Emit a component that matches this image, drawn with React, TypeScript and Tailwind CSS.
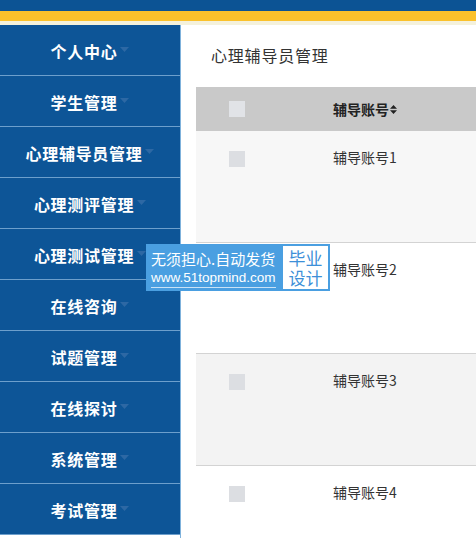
const menu = [
  '个人中心',
  '学生管理',
  '心理辅导员管理',
  '心理测评管理',
  '心理测试管理',
  '在线咨询',
  '试题管理',
  '在线探讨',
  '系统管理',
  '考试管理',
];

const rows = [
  { name: '辅导账号1', bg: 'bg-[#f7f7f7]' },
  { name: '辅导账号2', bg: 'bg-white' },
  { name: '辅导账号3', bg: 'bg-[#f3f3f3]' },
  { name: '辅导账号4', bg: 'bg-white' },
];

const font = { fontFamily: '"Noto Sans CJK SC", "Liberation Sans", sans-serif' };

export default function App() {
  return (
    <div className="relative w-[476px] h-[538px] overflow-hidden bg-white" style={font}>
      {/* top bars */}
      <div className="h-[11px] bg-[#0c5394]" />
      <div className="h-[10px] bg-[#fbc12b]" />
      <div className="h-[4px] bg-[#f4f1dc]" />

      <div className="flex">
        {/* sidebar */}
        <div className="w-[181px] shrink-0 border-r border-[#7fb2dc]">
          {menu.map((item) => (
            <div
              key={item}
              className="h-[51px] pt-[2px] flex items-center justify-center bg-[#0d5597] border-b border-[#6d9fcc] text-white text-[16px] tracking-[0.7px] font-bold"
            >
              <span>{item}</span>
              <svg className="ml-[3px] mb-[4px]" width="9" height="5" viewBox="0 0 9 5">
                <path d="M0 0h9L4.5 5z" fill="#2d68a4" />
              </svg>
            </div>
          ))}
        </div>

        {/* main */}
        <div className="flex-1 pl-[15px]">
          <div className="h-[62px] flex items-center pl-[15px] pb-[2px] text-[16px] tracking-[0.8px] text-[#333]">
            心理辅导员管理
          </div>
          <div className="bg-[#c9c9c9] h-[44px] flex items-center">
            <div className="w-[16px] h-[16px] ml-[33px] bg-[#e1e3e7]" />
            <div className="ml-[88px] text-[14px] font-bold text-[#222] flex items-center">
              <span>辅导账号</span>
              <svg className="ml-[1px]" width="7" height="9" viewBox="0 0 7 9">
                <path d="M0 3.8L3.5 0L7 3.8z M0 5.2h7L3.5 9z" fill="#222" />
              </svg>
            </div>
          </div>
          {rows.map((r) => (
            <div key={r.name} className={`${r.bg} h-[111.5px] border-b border-[#d3d3d3] flex items-start`}>
              <div className="w-[16px] h-[16px] ml-[33px] mt-[20px] bg-[#dcdee2]" />
              <div className="ml-[88px] mt-[16px] text-[14px] text-[#333]">{r.name}</div>
            </div>
          ))}
        </div>
      </div>

      {/* watermark */}
      <div className="absolute left-[146px] top-[244px] w-[184px] h-[47px] bg-[#4a9fe1] flex items-center pl-[5px] pr-[2px]">
        <div className="flex flex-col text-white">
          <span className="text-[15px] leading-[21px]">无须担心.自动发货</span>
          <span
            className="text-[13.5px] leading-[18px] border-b border-white/70"
            style={{ fontFamily: '"Liberation Sans", sans-serif' }}
          >
            www.51topmind.com
          </span>
        </div>
        <div className="ml-auto w-[45px] h-[43px] bg-white flex flex-col items-center justify-center text-[#3d8fd8] text-[17px] leading-[20px]">
          <span>毕业</span>
          <span>设计</span>
        </div>
      </div>
    </div>
  );
}
